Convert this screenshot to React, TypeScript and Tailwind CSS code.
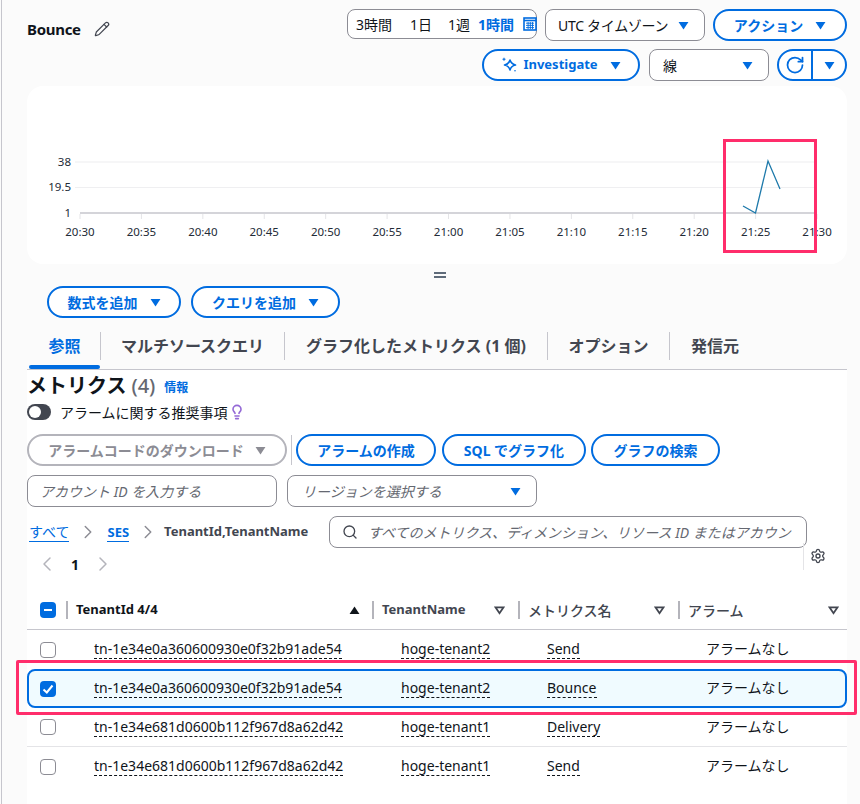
import { ChevronLeft, ChevronRight, Lightbulb, Pencil, RotateCw, Search, Settings } from "lucide-react";

const fontStack = "font-['Noto_Sans','Noto_Sans_CJK_JP',sans-serif]";

const times = ["20:30", "20:35", "20:40", "20:45", "20:50", "20:55", "21:00", "21:05", "21:10", "21:15", "21:20", "21:25", "21:30"];

const rows = [
  { id: "tn-1e34e0a360600930e0f32b91ade54", name: "hoge-tenant2", metric: "Send", selected: false },
  { id: "tn-1e34e0a360600930e0f32b91ade54", name: "hoge-tenant2", metric: "Bounce", selected: true },
  { id: "tn-1e34e681d0600b112f967d8a62d42", name: "hoge-tenant1", metric: "Delivery", selected: false },
  { id: "tn-1e34e681d0600b112f967d8a62d42", name: "hoge-tenant1", metric: "Send", selected: false },
];

function Caret({ className = "" }: { className?: string }) {
  return (
    <svg viewBox="0 0 12 10" className={`w-[11px] h-[9px] shrink-0 fill-current ${className}`}>
      <path d="M0.5 1h11L6 9.5z" />
    </svg>
  );
}

function PillButton({ label, className = "" }: { label: string; className?: string }) {
  return (
    <button className={`h-[32px] flex items-center justify-center rounded-full border-2 border-[#006ce0] bg-white text-[14px] font-bold text-[#006ce0] ${className}`}>
      {label}
    </button>
  );
}

function CaretButton({ label, className = "" }: { label: string; className?: string }) {
  return (
    <button className={`h-[32px] flex items-center justify-center gap-[12px] rounded-full border-2 border-[#006ce0] bg-white text-[14px] font-bold text-[#006ce0] ${className}`}>
      {label}
      <Caret />
    </button>
  );
}

function SelectBox({ label, className = "" }: { label: string; className?: string }) {
  return (
    <div className={`h-[32px] flex items-center justify-between rounded-lg border border-[#8c8c94] bg-white text-[14px] text-[#0f141a] ${className}`}>
      {label}
      <Caret className="text-[#006ce0]" />
    </div>
  );
}

function Chart() {
  const x0 = 53;
  const step = 61.42;
  return (
    <svg viewBox="0 0 820 178" className="w-[820px] h-[178px] block">
      <line x1="48" y1="76" x2="788" y2="76" stroke="#f3f3f5" strokeWidth="1.5" />
      <line x1="48" y1="101.500" x2="788" y2="101.500" stroke="#efeff1" strokeWidth="1" />
      <line x1="53" y1="127" x2="788" y2="127" stroke="#c6c6cd" strokeWidth="1.5" />
      {times.map((t, i) => (
        <g key={t}>
          <line x1={x0 + step * i} y1="128" x2={x0 + step * i} y2="133" stroke="#e4e4e7" />
          <text x={x0 + step * i} y="150" textAnchor="middle" fontSize="11.5" fill="#232b37">
            {t}
          </text>
        </g>
      ))}
      <text x="44" y="80" textAnchor="end" fontSize="11.5" fill="#232b37">38</text>
      <text x="44" y="105" textAnchor="end" fontSize="11.5" fill="#232b37">19.5</text>
      <text x="44" y="131" textAnchor="end" fontSize="11.5" fill="#232b37">1</text>
      <polyline points="716,120 728.500,127 741,75 753,103" fill="none" stroke="#1f7aab" strokeWidth="1.3" />
    </svg>
  );
}

function Checkbox({ state }: { state: "off" | "on" | "mixed" }) {
  if (state === "off") {
    return <span className="block w-[16px] h-[16px] rounded-[4px] border border-[#8c8c94] bg-white" />;
  }
  return (
    <span className="flex items-center justify-center w-[16px] h-[16px] rounded-[4px] bg-[#006ce0]">
      <svg viewBox="0 0 16 16" className="w-[16px] h-[16px]" fill="none" stroke="white" strokeWidth="2">
        {state === "on" ? <path d="M3.500 8.500 6.800 11.500 12.500 4.500" /> : <path d="M4 8h8" />}
      </svg>
    </span>
  );
}

function HeaderCell({ label, sorted, latin, className = "pr-[13px]" }: { label: string; sorted?: boolean; latin?: boolean; className?: string }) {
  return (
    <div className={`h-[18px] flex items-center justify-between border-l-2 border-[#b4b4bb] pl-[8px] text-[#424650] ${className}`}>
      <span className={`${latin ? "text-[13px] font-bold" : "text-[14px] font-medium"} ${sorted ? "text-[13.5px] text-[#0f141a]" : ""}`}>{label}</span>
      {sorted ? (
        <svg viewBox="0 0 12 10" className="w-[11px] h-[9px] fill-[#0f141a]">
          <path d="M6 .5 11.500 9H.5z" />
        </svg>
      ) : (
        <svg viewBox="0 0 12 10" className="w-[11px] h-[9px] fill-none stroke-[#424650] stroke-2">
          <path d="M1.500 1.500h9L6 8z" />
        </svg>
      )}
    </div>
  );
}

function Dashed({ children }: { children: string }) {
  return <span className="border-b border-dashed border-[#0f141a] leading-[17px]">{children}</span>;
}

export default function App() {
  return (
    <div className={`relative w-[860px] h-[804px] overflow-hidden bg-[#fbfbfb] ${fontStack}`}>
      <div className="absolute left-px top-0 bottom-0 w-px bg-[#c6c6cd]" />

      {/* header */}
      <div className="flex justify-between pl-[27px] pr-[13px] pt-[9px]">
        <div className="flex items-center gap-[13px] h-[40px] self-start">
          <h1 className="text-[15px] tracking-[-0.3px] font-bold text-[#0f141a]">Bounce</h1>
          <Pencil size={16} strokeWidth={1.8} className="text-[#424650]" />
        </div>
        <div className="flex flex-col items-end gap-[8px]">
          <div className="flex gap-[8px]">
            <div className="w-[190px] h-[30px] flex items-center rounded-lg border border-[#8c8c94] bg-white pl-[8px] text-[14px] text-[#0f141a] whitespace-nowrap">
              <span>3時間</span>
              <span className="ml-[18px]">1日</span>
              <span className="ml-[16px]">1週</span>
              <span className="ml-[8px] font-bold text-[#006ce0]">1時間</span>
              <svg viewBox="0 0 14 14" className="ml-[9px] w-[14px] h-[14px] shrink-0" fill="none" stroke="#006ce0">
                <rect x="1" y="1" width="12" height="12" strokeWidth="1.600" />
                <path d="M1 3.500h12" strokeWidth="1.600" />
                <path d="M3 6.200h8M3 8.400h8M3 10.600h8M5.100 5v7M7.300 5v7M9.500 5v7" strokeWidth="0.9" />
              </svg>
            </div>
            <SelectBox label="UTC タイムゾーン" className="w-[160px] pl-[12px] pr-[15px] tracking-[-0.3px]" />
            <CaretButton label="アクション" className="w-[134px]" />
          </div>
          <div className="flex">
            <button className="w-[158px] h-[32px] flex items-center justify-center rounded-full border-2 border-[#006ce0] bg-white text-[13px] font-bold text-[#006ce0]">
              <svg viewBox="0 0 16 16" className="w-[16px] h-[16px] mr-[6px]" fill="none" stroke="#006ce0" strokeWidth="1.600">
                <path d="M9 3c.8 3 2 4.200 5.500 5-3.500.8-4.700 2-5.500 5C8.200 10 7 8.800 3.500 8 7 7.200 8.200 6 9 3z" strokeLinejoin="round" />
                <path d="M3 .8v3M1.500 2.300h3" strokeWidth="1.100" />
                <circle cx="14" cy="13.800" r=".8" fill="#006ce0" stroke="none" />
              </svg>
              Investigate
              <Caret className="ml-[12px]" />
            </button>
            <SelectBox label="線" className="ml-[9px] w-[120px] pl-[13px] pr-[15px]" />
            <div className="ml-[8px] w-[70px] h-[32px] flex rounded-full border-2 border-[#006ce0] bg-white text-[#006ce0]">
              <span className="w-[34px] flex items-center justify-center border-r-2 border-[#006ce0]">
                <RotateCw size={20} strokeWidth={2.1} />
              </span>
              <span className="flex-1 flex items-center justify-center">
                <Caret />
              </span>
            </div>
          </div>
        </div>
      </div>

      {/* chart */}
      <div className="mt-[5px] ml-[27px] w-[820px] h-[178px] rounded-2xl bg-white overflow-hidden">
        <Chart />
      </div>

      <div className="h-[22px] flex items-center justify-center pl-[20px]">
        <span className="w-[12px] h-[6px] border-y-2 border-[#5f6b7a]" />
      </div>

      <div className="flex gap-[10px] pl-[47px]">
        <CaretButton label="数式を追加" className="w-[134px]" />
        <CaretButton label="クエリを追加" className="w-[149px]" />
      </div>

      {/* tabs */}
      <div className="mt-[14px] ml-[27px] w-[820px] h-[38px] flex border-b border-[#c6c6cd] text-[16px] font-bold text-[#424650]">
        <div className="relative w-[74px] h-[28px] flex items-center justify-center pl-[2px] border-r border-[#c6c6cd] text-[#006ce0]">
          参照
          <span className="absolute left-[2px] right-0 top-[33px] h-[4px] rounded-full bg-[#006ce0]" />
        </div>
        <div className="w-[184px] h-[28px] flex items-center justify-center border-r border-[#c6c6cd]">マルチソースクエリ</div>
        <div className="w-[263px] h-[28px] flex items-center justify-center border-r border-[#c6c6cd]">グラフ化したメトリクス (1 個)</div>
        <div className="w-[122px] h-[28px] flex items-center justify-center border-r border-[#c6c6cd]">オプション</div>
        <div className="pl-[21px] h-[28px] flex items-center">発信元</div>
      </div>

      {/* metrics panel */}
      <div className="ml-[27px] w-[820px] h-[435px] bg-white">
        <div className="h-[34px] flex items-center pb-[2px]">
          <h2 className="text-[20px] font-bold text-[#0f141a]">メトリクス</h2>
          <span className="ml-[5px] text-[20px] font-medium text-[#656871]">(4)</span>
          <a className="ml-[9px] mt-[3px] text-[12px] font-bold text-[#006ce0]">情報</a>
        </div>
        <div className="h-[16px] flex items-center">
          <span className="relative block w-[24px] h-[16px] rounded-full bg-[#424650]">
            <span className="absolute left-[2px] top-[2px] w-[12px] h-[12px] rounded-full bg-white" />
          </span>
          <span className="ml-[9px] text-[14px] text-[#0f141a]">アラームに関する推奨事項</span>
          <Lightbulb size={16} strokeWidth={2.4} className="ml-[1px] text-[#9469d6]" />
        </div>

        <div className="mt-[14px] flex items-center">
          <button className="w-[260px] h-[32px] flex items-center justify-center gap-[11px] rounded-full border-2 border-[#b4b4bb] bg-white text-[14px] font-bold text-[#8c8c94]">
            アラームコードのダウンロード
            <Caret />
          </button>
          <span className="ml-[4px] w-px h-[30px] bg-[#c6c6cd]" />
          <PillButton label="アラームの作成" className="ml-[4px] w-[140px]" />
          <PillButton label="SQL でグラフ化" className="ml-[6px] w-[144px]" />
          <PillButton label="グラフの検索" className="ml-[5px] w-[129px]" />
        </div>

        <div className="mt-[9px] flex gap-[10px]">
          <div className="w-[250px] h-[32px] flex items-center rounded-lg border border-[#8c8c94] px-[12px] text-[14px] italic text-[#656871]">
            アカウント ID を入力する
          </div>
          <div className="w-[250px] h-[32px] flex items-center justify-between rounded-lg border border-[#8c8c94] pl-[14px] pr-[15px] text-[14px] italic text-[#656871]">
            リージョンを選択する
            <Caret className="text-[#006ce0]" />
          </div>
        </div>

        <div className="mt-[9px] flex items-center h-[32px] text-[14px]">
          <a className="ml-[2px] border-b border-[#006ce0] text-[#006ce0] leading-[18px]">すべて</a>
          <ChevronRight size={22} strokeWidth={1.6} className="ml-[8px] text-[#8c8c94]" />
          <a className="ml-[8px] border-b border-[#006ce0] text-[13px] font-bold text-[#006ce0] leading-[18px]">SES</a>
          <ChevronRight size={22} strokeWidth={1.6} className="ml-[8px] text-[#8c8c94]" />
          <span className="ml-[5px] text-[13px] font-bold text-[#424650]">TenantId,TenantName</span>
          <div className="ml-auto mr-[40px] w-[478px] h-[32px] flex items-center rounded-lg border border-[#8c8c94] pl-[12px] pr-[12px] text-[14px] italic text-[#656871] overflow-hidden whitespace-nowrap">
            <Search size={16} strokeWidth={2} className="shrink-0 text-[#424650]" />
            <span className="ml-[10px] overflow-hidden">すべてのメトリクス、ディメンション、リソース ID またはアカウント ID を検索</span>
          </div>
        </div>

        <div className="relative h-[32px] flex items-center text-[#b4b4bb]">
          <ChevronLeft size={24} strokeWidth={1.5} className="ml-[8px]" />
          <span className="ml-[12px] text-[14px] font-bold text-[#0f141a]">1</span>
          <ChevronRight size={24} strokeWidth={1.5} className="ml-[12px]" />
          <span className="absolute left-[776px] top-[-5px] w-px h-[27px] bg-[#e4e4e7]" />
          <Settings size={16} strokeWidth={2} className="absolute left-[783px] top-0 text-[#424650]" />
        </div>

        {/* table */}
        <div className="mt-[14px] h-[36px] pb-[3px] grid grid-cols-[39px_306px_146px_160px_169px] items-center border-b border-[#c6c6cd]">
          <div className="pl-[13px]">
            <Checkbox state="mixed" />
          </div>
          <HeaderCell label="TenantId 4/4" sorted latin className="pr-[12px]" />
          <HeaderCell label="TenantName" latin />
          <HeaderCell label="メトリクス名" />
          <HeaderCell label="アラーム" className="pr-[8px]" />
        </div>
        {rows.map((r, i) => (
          <div
            key={i}
            className={`h-[39px] grid items-center text-[14px] text-[#0f141a] ${
              r.selected
                ? "grid-cols-[37px_306px_146px_160px_167px] rounded-lg border-2 border-[#006ce0] bg-[#f0fbff]"
                : `grid-cols-[39px_306px_146px_160px_169px] ${i === 2 ? "border-b border-[#e4e4e7]" : ""}`
            }`}
          >
            <div className={r.selected ? "pl-[11px]" : "pl-[13px]"}>
              <Checkbox state={r.selected ? "on" : "off"} />
            </div>
            <div className="pl-[28px] pb-[2px]"><Dashed>{r.id}</Dashed></div>
            <div className="pl-[29px] pb-[2px]"><Dashed>{r.name}</Dashed></div>
            <div className="pl-[29px] pb-[2px]"><Dashed>{r.metric}</Dashed></div>
            <div className="pl-[28px] pb-[2px]">アラームなし</div>
          </div>
        ))}
      </div>

      {/* annotations */}
      <div className="absolute left-[723px] top-[139px] w-[94px] h-[114px] border-[3px] border-[#ff2d6b]" />
      <div className="absolute left-[16px] top-[660px] w-[841px] h-[55px] border-[3px] border-[#ff2d6b] rounded-[2px]" />
    </div>
  );
}
